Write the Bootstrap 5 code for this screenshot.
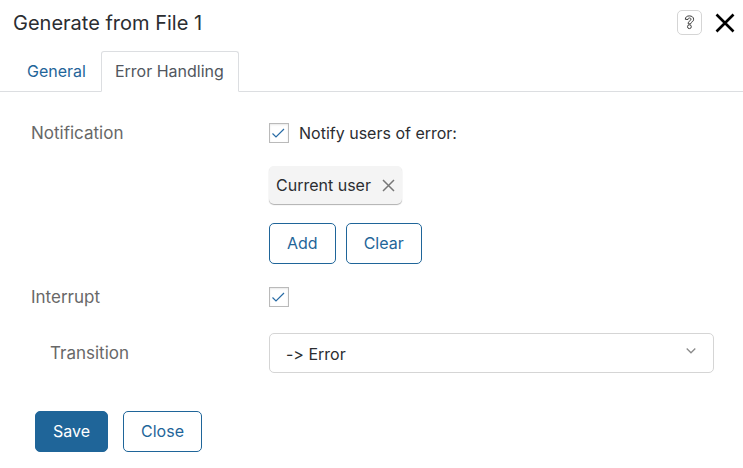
<!DOCTYPE html>
<html lang="en">
<head>
<meta charset="utf-8">
<meta name="viewport" content="width=device-width, initial-scale=1">
<title>Generate from File 1</title>
<link href="https://cdn.jsdelivr.net/npm/bootstrap@5.3.0/dist/css/bootstrap.min.css" rel="stylesheet">
<style>
  body { font-family: Inter, "Liberation Sans", sans-serif; font-size: 16px; line-height: 24px; color: #2b2d31; background: #fff; }
  .dialog-head { padding: 10px 8px 0 13px; }
  .dialog-title { font-size: 20px; line-height: 26px; font-weight: 400; }
  .head-tools { gap: 13px; }
  .help-btn { width: 25px; height: 25px; border: 1px solid #d5d5d5; border-radius: 5px; }
  .close-btn { width: 20px; height: 20px; }
  .dialog-tabs { padding: 15px 13px 0; --bs-nav-tabs-border-color: #dcdee1; --bs-nav-tabs-link-active-border-color: #dcdee1 #dcdee1 #fff; --bs-nav-tabs-border-radius: 3px; --bs-nav-link-color: #1f6599; --bs-nav-tabs-link-active-color: #51565e; }
  .dialog-tabs .nav-link { padding: 7px 14px 8px 13px; }
  .dialog-body { padding: 29px 29px 0 31px; }
  .field-name { width: 238px; font-size: 17px; color: #686868; }
  .field-name.nested { padding-left: 19px; }
  .tick { appearance: none; width: 20px; height: 20px; margin: 0; border: 1px solid #bababa; background: #fff; }
  .tick:checked { background: #fff url("data:image/svg+xml,%3Csvg xmlns='http://www.w3.org/2000/svg' viewBox='0 0 18 18'%3E%3Cpath d='M2.500 9.500L6 13 14 5' fill='none' stroke='%23286ba5' stroke-width='1.2'/%3E%3C/svg%3E") center / 18px no-repeat; box-shadow: inset 0 1px 2px #e8e8e8; }
  .tick-row { gap: 10px; }
  .user-chip { height: 38px; margin-top: 21px; padding: 0 7px; gap: 11px; background: #f4f4f4; border-radius: 5px; box-shadow: 0 1px 1px #b0b0b0; }
  .chip-actions { margin-top: 19px; gap: 10px; }
  .btn { --bs-btn-font-size: 16px; --bs-btn-line-height: 23px; --bs-btn-padding-x: 17px; --bs-btn-padding-y: 8px; --bs-btn-border-radius: 5px; }
  .btn-outline-primary { --bs-btn-color: #1f6599; --bs-btn-border-color: #1f6599; --bs-btn-hover-bg: #1f6599; }
  .btn-primary { --bs-btn-bg: #1f6599; --bs-btn-border-color: #1f6599; --bs-btn-hover-bg: #18547f; }
  .interrupt-row { margin-top: 21px; }
  .transition-row { margin-top: 24px; }
  .form-select { height: 40px; padding: 1px 40px 0 16px; font-size: 16px; font-feature-settings: "calt" 0; color: #2b2d31; border-color: #d5d5d5; border-radius: 5px; background-image: url("data:image/svg+xml,%3Csvg xmlns='http://www.w3.org/2000/svg' viewBox='0 0 10 10'%3E%3Cpath d='M.7 2.5L5 6.8 9.3 2.5' fill='none' stroke='%238c8c8c' stroke-width='1.3'/%3E%3C/svg%3E"); background-size: 10px; background-position: right 17px top 12px; }
  .dialog-foot { padding: 38px 35px 16px; gap: 15px; }
</style>
</head>
<body>
<main>
  <header class="dialog-head d-flex align-items-start justify-content-between">
    <h1 class="dialog-title m-0">Generate from File 1</h1>
    <div class="head-tools d-flex align-items-center">
      <button type="button" class="help-btn bg-white p-0 d-flex align-items-center justify-content-center" aria-label="Help">
        <svg width="11" height="15" viewBox="0 0 11 15" fill="#fff" stroke="#3c3c3c" stroke-width="1"><path d="M1.3 4.3C1.3 2.1 3 .9 5.4.9s4.2 1.3 4.2 3.3c0 1.5-.8 2.3-1.9 3-.8.5-1 .9-1 1.7H4.2c0-1.7.5-2.3 1.5-3 .9-.6 1.3-1 1.3-1.7 0-.7-.6-1.2-1.5-1.2s-1.5.5-1.5 1.5z"/><circle cx="5.4" cy="11.7" r="1.9"/></svg>
      </button>
      <button type="button" class="close-btn border-0 bg-transparent p-0 d-flex" aria-label="Close dialog">
        <svg width="20" height="20" viewBox="0 0 20 20" fill="none" stroke="#000" stroke-width="2.6"><path d="M1.500 1.500l17 17M18.500 1.500l-17 17"/></svg>
      </button>
    </div>
  </header>

  <ul class="dialog-tabs nav nav-tabs">
    <li class="nav-item"><a class="nav-link" href="#general">General</a></li>
    <li class="nav-item"><a class="nav-link active" aria-current="page" href="#errors">Error Handling</a></li>
  </ul>

  <form id="errors">
    <div class="dialog-body">
      <div class="d-flex">
        <div class="field-name flex-shrink-0">Notification</div>
        <div class="flex-grow-1">
          <div class="tick-row d-flex align-items-center">
            <input class="tick" type="checkbox" id="notify" checked>
            <label for="notify">Notify users of error:</label>
          </div>
          <div class="user-chip d-inline-flex align-items-center">
            <span>Current user</span>
            <button type="button" class="border-0 bg-transparent p-0 d-flex" aria-label="Remove Current user">
              <svg width="13" height="13" viewBox="0 0 13 13" fill="none" stroke="#777" stroke-width="1.5"><path d="M1 1l11 11M12 1L1 12"/></svg>
            </button>
          </div>
          <div class="chip-actions d-flex">
            <button type="button" class="btn btn-outline-primary">Add</button>
            <button type="button" class="btn btn-outline-primary">Clear</button>
          </div>
        </div>
      </div>
      <div class="interrupt-row d-flex align-items-center">
        <label class="field-name flex-shrink-0" for="interrupt">Interrupt</label>
        <input class="tick" type="checkbox" id="interrupt" checked>
      </div>
      <div class="transition-row d-flex align-items-center">
        <label class="field-name nested flex-shrink-0" for="transition">Transition</label>
        <select class="form-select" id="transition"><option>-&gt; Error</option></select>
      </div>
    </div>
    <footer class="dialog-foot d-flex">
      <button type="submit" class="btn btn-primary">Save</button>
      <button type="button" class="btn btn-outline-primary">Close</button>
    </footer>
  </form>
</main>
<script src="https://cdn.jsdelivr.net/npm/bootstrap@5.3.0/dist/js/bootstrap.bundle.min.js"></script>
</body>
</html>
